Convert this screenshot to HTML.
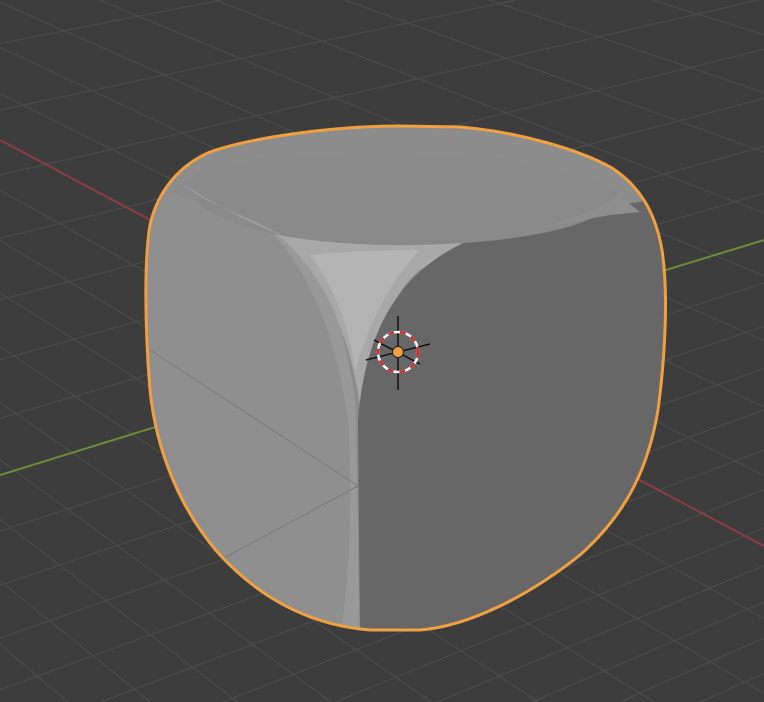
<!DOCTYPE html>
<html><head><style>html,body{margin:0;padding:0;background:#3d3d3d;overflow:hidden;width:764px;height:702px}svg{display:block;position:absolute;left:0;top:0}</style></head>
<body>
<svg id="s" width="764" height="702" viewBox="0 0 764 702" xmlns="http://www.w3.org/2000/svg">
<rect width="764" height="702" fill="#3d3d3d"/>
<g id="grid" stroke="#4c4c4c" stroke-width="1.2"></g>
<line x1="0" y1="140" x2="398" y2="352" stroke="#8c3c44" stroke-width="2"/>
<line x1="398" y1="352" x2="764" y2="546" stroke="#8c3c44" stroke-width="2"/>
<line x1="0" y1="475" x2="398" y2="352" stroke="#6b8a3a" stroke-width="2"/>
<line x1="398" y1="352" x2="764" y2="240" stroke="#6b8a3a" stroke-width="2"/>
<defs><clipPath id="c"><path id="o" d="M400,126 C330,126 250,138 210,152 C180,165 158,190 150,225 C144,260 145,330 150,390 C156,450 180,510 220,555 C260,598 310,625 370,630 L420,630 C470,626 530,595 580,555 C625,515 648,470 658,410 C666,350 668,290 662,250 C655,210 638,185 612,168 C580,150 520,132 460,127 Z"/></clipPath></defs>
<g clip-path="url(#c)">
<rect x="140" y="120" width="540" height="520" fill="#8c8c8c"/>
<path d="M140,180 L270,230 C320,270 350,330 358,420 L358,640 L140,640 Z" fill="#8f8f8f"/>
<path d="M265,225 C320,250 340,300 355,400 L360,640 L340,640 C352,560 352,480 348,420 C335,320 300,260 265,225Z" fill="#999"/>
<path d="M265,225 Q330,240 470,240 L420,270 Q380,300 362,420 Q345,280 265,225Z" fill="#a8a8a8"/>
<path d="M310,255 Q360,250 420,250 Q380,290 355,370 Q345,300 310,255Z" fill="#b4b4b4"/>
<path d="M470,240 C560,215 620,205 650,200 L690,200 L690,640 L360,640 L358,420 C365,330 400,270 470,240Z" fill="#676767"/>
<path d="M185,185 C200,140 580,140 618,195 C610,225 520,245 400,245 C290,245 200,225 185,185Z" fill="#8a8a8a"/>
<path d="M185,185 C230,215 270,230 290,240 L262,225 C230,210 200,200 185,185Z" fill="#a0a0a0"/>
<path d="M618,195 C600,210 560,225 505,235 L610,215 L640,212Z" fill="#8e8e8e"/>
<line x1="150" y1="350" x2="358" y2="486" stroke="#7a7a7a" stroke-width="1"/>
<line x1="358" y1="486" x2="220" y2="560" stroke="#7a7a7a" stroke-width="1"/>
</g>
<use href="#o" fill="none" stroke="#f0a040" stroke-width="3"/>
<g stroke="#111" stroke-width="1.5">
<line x1="398" y1="316" x2="398" y2="390"/>
<line x1="366" y1="360" x2="430" y2="344"/>
<line x1="374" y1="340" x2="420" y2="364"/>
</g>
<circle cx="398" cy="352" r="20" fill="none" stroke="#fff" stroke-width="2.5"/>
<circle cx="398" cy="352" r="20" fill="none" stroke="#d03030" stroke-width="2.5" stroke-dasharray="6 6"/>
<circle cx="398" cy="352" r="5.5" fill="#f0a040" stroke="#222" stroke-width="1"/>
</svg>
<script>
(function(){var g=document.getElementById('grid'),ns='http://www.w3.org/2000/svg';
var O=[398,352],VR=[-1587,-700],VG=[3792,-700];
function L(a,b){var l=document.createElementNS(ns,'line');
var dx=a[0]-b[0],dy=a[1]-b[1],s=3000/Math.hypot(dx,dy);
l.setAttribute('x1',b[0]);l.setAttribute('y1',b[1]);l.setAttribute('x2',a[0]+dx*s);l.setAttribute('y2',a[1]+dy*s);g.appendChild(l);}
for(var t=-46;t<=30;t++){if(t==0)continue;var d=1+0.0212*t;if(d<=0.02)continue;
var p=[O[0]-72*t/d,O[1]+22.3*t/d];L(p,VR);}
for(var t=-32;t<=30;t++){if(t==0)continue;var d=1+0.0302*t;if(d<=0.02)continue;
var p=[O[0]+60*t/d,O[1]+31.8*t/d];L(p,VG);}
})();
</script>
</body></html>
